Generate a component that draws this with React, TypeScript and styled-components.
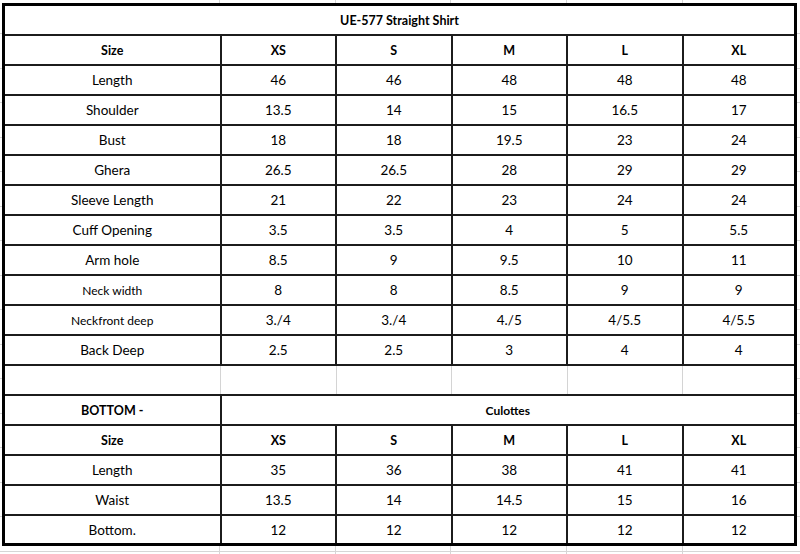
import React from "react";
import styled, { createGlobalStyle, css } from "styled-components";

const GlobalStyle = createGlobalStyle`
  html, body {
    margin: 0;
    padding: 0;
    background: #ffffff;
  }
  body {
    font-family: "Lato", "Open Sans", "Liberation Sans", sans-serif;
    color: #000;
  }
`;

const ROW_H = 30;

const Sheet = styled.div`
  width: 800px;
  height: 554px;
  box-sizing: border-box;
  padding: 3px 0 0 2px;
  overflow: hidden;
  background-color: #fff;
  background-image:
    linear-gradient(to right, transparent 219px, #d6d6d6 219px, #d6d6d6 220px, transparent 220px),
    linear-gradient(to right, transparent 335px, #d6d6d6 335px, #d6d6d6 336px, transparent 336px),
    linear-gradient(to right, transparent 450px, #d6d6d6 450px, #d6d6d6 451px, transparent 451px),
    linear-gradient(to right, transparent 566px, #d6d6d6 566px, #d6d6d6 567px, transparent 567px),
    linear-gradient(to right, transparent 682px, #d6d6d6 682px, #d6d6d6 683px, transparent 683px),
    repeating-linear-gradient(to bottom, transparent 0, transparent 33.5px, #d6d6d6 33.5px, #d6d6d6 34.5px, transparent 34.5px, transparent ${ROW_H}px);
`;

const Table = styled.table`
  width: 792px;
  table-layout: fixed;
  border-collapse: collapse;
  border: 3px solid #000;
  background: #fff;
`;

const Col = styled.col<{ $w: number }>`
  width: ${(p) => p.$w}px;
`;

const Row = styled.tr`
  height: ${ROW_H}px;
`;

const Cell = styled.td<{ $bold?: boolean; $small?: boolean; $ghost?: boolean }>`
  border: 2px solid #1c1c1c;
  padding: 3px 0 0;
  text-align: center;
  vertical-align: middle;
  font-size: ${(p) => (p.$bold ? "12.5px" : "13.5px")};
  line-height: 1;
  font-weight: ${(p) => (p.$bold ? 700 : 400)};
  white-space: nowrap;
  ${(p) =>
    p.$small &&
    css`
      font-size: 12px;
    `}
  ${(p) =>
    p.$ghost &&
    css`
      border-left: 1px solid #d4d4d4;
      border-right: 1px solid #d4d4d4;
    `}
`;

const EdgeCell = styled(Cell)`
  border-left: 3px solid #000;
`;

type Line = { label: string; values: string[]; small?: boolean };

const sizes = ["XS", "S", "M", "L", "XL"];

const top: Line[] = [
  { label: "Length", values: ["46", "46", "48", "48", "48"] },
  { label: "Shoulder", values: ["13.5", "14", "15", "16.5", "17"] },
  { label: "Bust", values: ["18", "18", "19.5", "23", "24"] },
  { label: "Ghera", values: ["26.5", "26.5", "28", "29", "29"] },
  { label: "Sleeve Length", values: ["21", "22", "23", "24", "24"] },
  { label: "Cuff Opening", values: ["3.5", "3.5", "4", "5", "5.5"] },
  { label: "Arm hole", values: ["8.5", "9", "9.5", "10", "11"] },
  { label: "Neck width", values: ["8", "8", "8.5", "9", "9"], small: true },
  { label: "Neckfront deep", values: ["3./4", "3./4", "4./5", "4/5.5", "4/5.5"], small: true },
  { label: "Back Deep", values: ["2.5", "2.5", "3", "4", "4"] },
];

const bottom: Line[] = [
  { label: "Length", values: ["35", "36", "38", "41", "41"] },
  { label: "Waist", values: ["13.5", "14", "14.5", "15", "16"] },
  { label: "Bottom.", values: ["12", "12", "12", "12", "12"] },
];

const DataRow = ({ line }: { line: Line }) => (
  <Row>
    <Cell $small={line.small}>{line.label}</Cell>
    {line.values.map((v, i) => (
      <Cell key={i}>{v}</Cell>
    ))}
  </Row>
);

const SizeRow = () => (
  <Row>
    <Cell $bold>Size</Cell>
    {sizes.map((s) => (
      <Cell key={s} $bold>
        {s}
      </Cell>
    ))}
  </Row>
);

export default function App() {
  return (
    <>
      <GlobalStyle />
      <Sheet>
        <Table>
          <colgroup>
            <Col $w={217} />
            <Col $w={115.5} />
            <Col $w={115.5} />
            <Col $w={115.5} />
            <Col $w={115.5} />
            <Col $w={113} />
          </colgroup>
          <tbody>
            <Row>
              <Cell colSpan={6} $bold>
                UE-577 Straight Shirt
              </Cell>
            </Row>
            <SizeRow />
            {top.map((l) => (
              <DataRow key={l.label} line={l} />
            ))}
            <Row>
              <EdgeCell $ghost />
              <Cell $ghost />
              <Cell $ghost />
              <Cell $ghost />
              <Cell $ghost />
              <Cell $ghost />
            </Row>
            <Row>
              <Cell $bold>BOTTOM -</Cell>
              <Cell colSpan={5} $bold $small>
                Culottes
              </Cell>
            </Row>
            <SizeRow />
            {bottom.map((l) => (
              <DataRow key={"b" + l.label} line={l} />
            ))}
          </tbody>
        </Table>
      </Sheet>
    </>
  );
}
